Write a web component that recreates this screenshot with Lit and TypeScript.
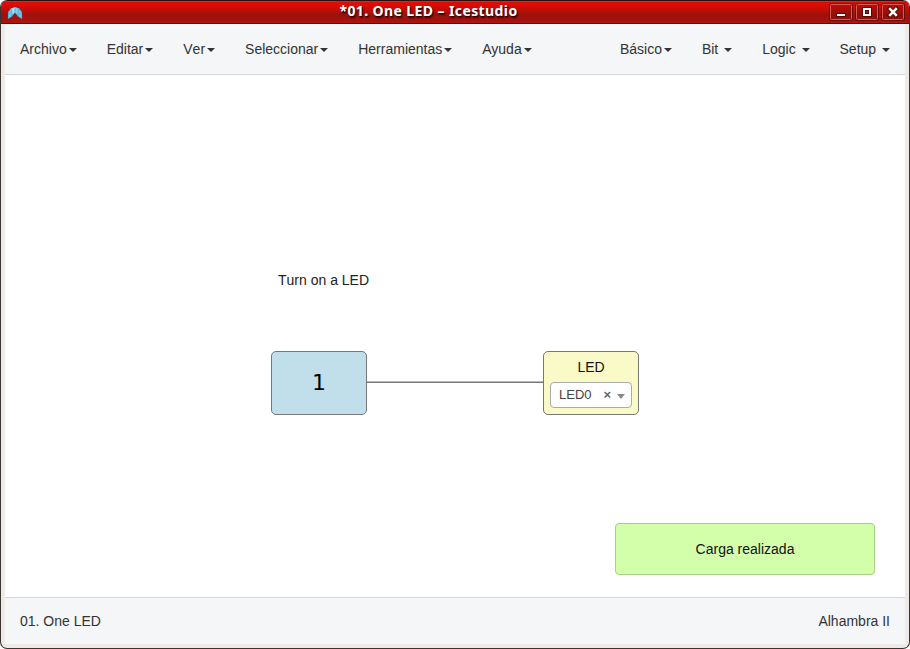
import { LitElement, html, css, svg } from "lit";
import { customElement, property } from "lit/decorators.js";

interface Menu {
  label: string;
  spaced?: boolean;
  unkerned?: boolean;
}

const LEFT_MENUS: Menu[] = [
  { label: "Archivo" },
  { label: "Editar" },
  { label: "Ver", unkerned: true },
  { label: "Seleccionar" },
  { label: "Herramientas" },
  { label: "Ayuda" },
];

const RIGHT_MENUS: Menu[] = [
  { label: "Básico" },
  { label: "Bit", spaced: true },
  { label: "Logic", spaced: true },
  { label: "Setup", spaced: true },
];

const GLYPHS = {
  minimize: svg`<path d="M7 10h10v4h-10z" fill="#5a0805"/><path d="M8 11h8v2h-8z" fill="#fff"/>`,
  maximize: svg`<path d="M7 4h10v10h-10z" fill="#5a0805"/><path d="M8 5h8v8h-8z" fill="#fff"/><path d="M10 7h4v4h-4z" fill="#5a0805"/><path d="M11 8h2v2h-2z" fill="#a51d15"/>`,
  close: svg`<path d="M8.8 5.8l6.4 6.4M15.2 5.8l-6.4 6.4" stroke="#5a0805" stroke-width="4.4" stroke-linecap="square"/><path d="M9.1 6.1l5.8 5.8M14.9 6.1l-5.8 5.8" stroke="#fff" stroke-width="2.5" stroke-linecap="square"/>`,
};

@customElement("title-bar")
export class TitleBar extends LitElement {
  @property() heading = "";

  static styles = css`
    :host {
      box-sizing: border-box;
      height: 24px;
      display: grid;
      grid-template-columns: 23px 1fr 78px;
      align-items: center;
      border-top: 1px solid #2b0f0d;
      border-bottom: 1px solid #4a100d;
      border-radius: 6px 6px 0 0;
      background: linear-gradient(#ee3b33 0, #e00c04 1px, #d90b03 5px, #b01008 11px, #9b120c 14px, #a6130c 20px, #b5150c 22px);
      padding: 0 4px 0 6px;
    }
    .logo {
      width: 16px;
      height: 14px;
      display: block;
      margin-top: 1px;
    }
    .heading {
      color: #fff;
      font: bold 14px/20px "Noto Sans", "Open Sans", sans-serif;
      text-align: center;
      white-space: nowrap;
      text-shadow: 1px 1px 1px #300, 1px 2px 2px #400;
      letter-spacing: 0.4px;
      margin-top: -2px;
    }
    .buttons {
      display: flex;
      gap: 2px;
      justify-content: flex-end;
    }
    .buttons svg {
      display: block;
      width: 24px;
      height: 18px;
    }
  `;

  private button(glyph: unknown) {
    return html`<svg viewBox="0 0 24 18">
      <rect x="0.5" y="0.5" width="23" height="17" rx="1.5" fill="#50080533" stroke="#6a0c08" />
      <rect x="1.5" y="1.5" width="21" height="15" rx="1" fill="none" stroke="#cc5e56" />
      ${glyph}
    </svg>`;
  }

  render() {
    return html`
      <svg class="logo" viewBox="0 0 16 14">
        <path d="M1 13V6l3-3.5L8 1.2l4 1.3L15 6v7L10.500 10 8 6.500 5.500 10z" fill="#74c8ec" stroke="#3d6a84" stroke-width=".4" />
        <path d="M4 2.500L8 1.200V6.500L5.500 8z" fill="#99def7" />
        <path d="M12 2.500L8 1.200V6.500L10.500 8z" fill="#7bcdee" />
        <path d="M1 6l4.500 4L4 2.500M15 6l-4.500 4L12 2.500M8 1.200V6.500" fill="none" stroke="#3f8fb8" stroke-width=".5" />
      </svg>
      <div class="heading">${this.heading}</div>
      <div class="buttons">
        ${this.button(GLYPHS.minimize)}${this.button(GLYPHS.maximize)}${this.button(GLYPHS.close)}
      </div>
    `;
  }
}

@customElement("menu-bar")
export class MenuBar extends LitElement {
  static styles = css`
    :host {
      box-sizing: border-box;
      height: 51px;
      display: flex;
      justify-content: space-between;
      background: #f4f6f8;
      border-bottom: 1px solid #d5d8db;
    }
    .group {
      display: flex;
    }
    .item {
      padding: 15px;
      line-height: 20px;
      white-space: pre;
    }
    .unkerned {
      font-kerning: none;
    }
    .caret {
      display: inline-block;
      margin-left: 2px;
      vertical-align: middle;
      border-top: 4px solid;
      border-left: 4px solid transparent;
      border-right: 4px solid transparent;
    }
  `;

  private group(menus: Menu[]) {
    return html`<div class="group">
      ${menus.map(
        (m) =>
          html`<div class="item ${m.unkerned ? "unkerned" : ""}">${m.label}${m.spaced ? " " : ""}<span class="caret"></span></div>`
      )}
    </div>`;
  }

  render() {
    return html`${this.group(LEFT_MENUS)}${this.group(RIGHT_MENUS)}`;
  }
}

@customElement("block-canvas")
export class BlockCanvas extends LitElement {
  static styles = css`
    :host {
      display: block;
      position: relative;
      background: #fff;
      color: #111;
    }
    .note,
    .block,
    .wire,
    .toast {
      position: absolute;
      box-sizing: border-box;
    }
    .note {
      left: 273px;
      top: 195px;
      line-height: 20px;
      white-space: nowrap;
      font-kerning: none;
      color: #222;
    }
    .block {
      width: 96px;
      height: 64px;
      top: 276px;
      border: 1px solid #777;
      border-radius: 5px;
    }
    .constant {
      left: 266px;
      background: #c0dfea;
      display: grid;
      place-items: center;
      color: #000;
      font: 22px/26px "DejaVu Sans", sans-serif;
    }
    .output {
      left: 538px;
      background: #fafac8;
      padding: 5px 6px 6px;
      display: flex;
      flex-direction: column;
      justify-content: space-between;
      text-align: center;
      line-height: 20px;
    }
    .wire {
      left: 362px;
      top: 306px;
      width: 176px;
      height: 2px;
      background: linear-gradient(#bbb 50%, #777 50%);
    }
    .select {
      box-sizing: border-box;
      height: 26px;
      border: 1px solid #aaa;
      border-radius: 4px;
      background: #fff;
      display: flex;
      align-items: center;
      padding: 0 6px 0 8px;
      color: #444;
      font-size: 13px;
    }
    .value {
      flex: 1;
      text-align: left;
    }
    .clear {
      font-weight: bold;
      font-size: 13px;
      color: #666;
      margin-right: 6px;
    }
    .arrow {
      border-top: 5px solid #888;
      border-left: 4px solid transparent;
      border-right: 4px solid transparent;
      margin-top: 2px;
    }
    .toast {
      right: 30px;
      bottom: 22px;
      width: 260px;
      height: 52px;
      display: grid;
      place-items: center;
      border: 1px solid #a9cf89;
      border-radius: 4px;
      background: #d3ffab;
    }
  `;

  render() {
    return html`
      <div class="note">Turn on a LED</div>
      <div class="wire"></div>
      <div class="block constant">1</div>
      <div class="block output">
        <div>LED</div>
        <div class="select">
          <span class="value">LED0</span><span class="clear">×</span><span class="arrow"></span>
        </div>
      </div>
      <div class="toast">Carga realizada</div>
    `;
  }
}

@customElement("app-root")
export class AppRoot extends LitElement {
  static styles = css`
    :host {
      display: flex;
      flex-direction: column;
      box-sizing: border-box;
      width: 910px;
      height: 649px;
      overflow: hidden;
      border: 1px solid #3a3432;
      border-top: 0;
      border-radius: 7px;
      background: #eeebe7;
      color: #333;
      font: 14px/20px "Liberation Sans", Arial, sans-serif;
    }
    .body {
      flex: 1;
      display: flex;
      flex-direction: column;
      margin: 0 4px 4px;
    }
    block-canvas {
      flex: 1;
    }
    .status {
      box-sizing: border-box;
      height: 47px;
      display: flex;
      justify-content: space-between;
      padding: 13px 15px;
      border-top: 1px solid #d5d8db;
      background: #f4f6f8;
    }
  `;

  render() {
    return html`
      <title-bar .heading=${"*01. One LED – Icestudio"}></title-bar>
      <div class="body">
        <menu-bar></menu-bar>
        <block-canvas></block-canvas>
        <div class="status"><span>01. One LED</span><span>Alhambra II</span></div>
      </div>
    `;
  }
}
